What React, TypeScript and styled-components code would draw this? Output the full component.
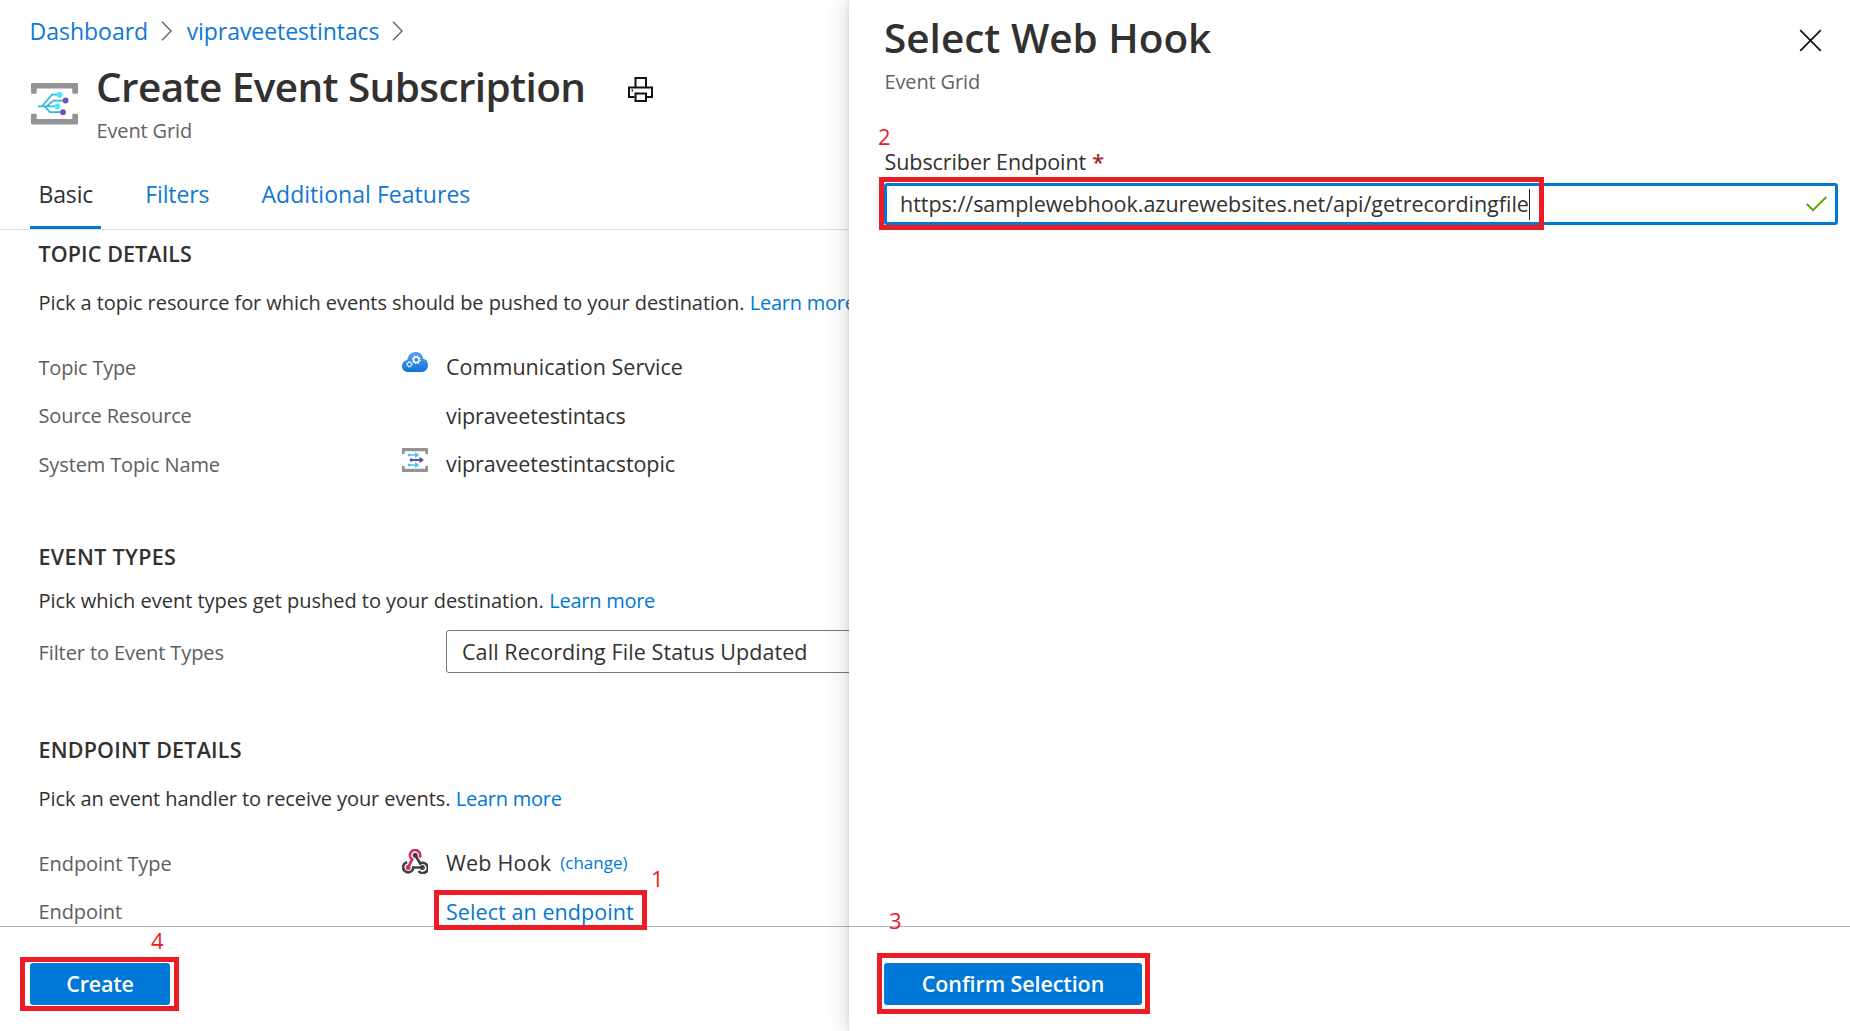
import React from 'react';
import styled, { createGlobalStyle } from 'styled-components';

const Global = createGlobalStyle`
  * { box-sizing: border-box; }
  html, body { margin: 0; padding: 0; background: #fff; overflow: hidden; }
  body { font-family: "Open Sans", "Noto Sans", sans-serif; color: #323130; }
`;

const Screen = styled.div`
  position: relative;
  display: flex;
  width: 1850px;
  height: 1031px;
  overflow: hidden;
  background: #fff;
`;

const MainBlade = styled.section`
  display: flex;
  flex-direction: column;
  width: 849px;
  flex: none;
  overflow: hidden;
`;

const ContextBlade = styled.section`
  position: relative;
  display: flex;
  flex-direction: column;
  flex: 1;
  background: #fff;
  box-shadow: 0 0 24px rgba(0, 0, 0, 0.18), 0 0 4px rgba(0, 0, 0, 0.1);
`;

const Txt = styled.span<{ $ls?: number }>`
  letter-spacing: ${(p) => p.$ls ?? 0}px;
  white-space: nowrap;
`;

const Breadcrumb = styled.nav`
  display: flex;
  align-items: center;
  height: 36px;
  margin-top: 13px;
  padding-left: 29.5px;
  font-size: 23px;
  line-height: 36px;
  color: #0f78d4;
  svg { margin: 0 14px 0 12.5px; }
`;

const Header = styled.header`
  display: flex;
  height: 110px;
  padding: 10px 0 0 31px;
`;

const HeaderIcon = styled.div`
  width: 47px;
  margin: 24px 18px 0 0;
  svg { display: block; }
`;

const Title = styled.h1`
  margin: 0;
  height: 57px;
  font-size: 40.5px;
  font-weight: 600;
  line-height: 56px;
`;

const Subtitle = styled.div`
  padding-left: 0.5px;
  font-size: 20px;
  line-height: 30px;
  color: #646260;
`;

const PrintIcon = styled.svg`
  margin: 18px 0 0 43px;
`;

const Tabs = styled.div`
  display: flex;
  gap: 36px;
  height: 71px;
  padding-left: 30px;
  border-bottom: 1px solid #dbdfe3;
`;

const Tab = styled.div<{ $active?: boolean }>`
  height: 70px;
  padding: 0 7.5px 0 8.5px;
  font-size: 23px;
  line-height: 70px;
  color: ${(p) => (p.$active ? '#323130' : '#0f78d4')};
  box-shadow: ${(p) => (p.$active ? 'inset 0 -3px 0 #0078d4' : 'none')};
`;

const Content = styled.div`
  flex: 1;
  min-height: 0;
  overflow: hidden;
  padding: 9px 0 0 38.5px;
`;

const SectionTitle = styled.h2<{ $gap: number; $top?: number }>`
  margin: ${(p) => p.$top ?? 0}px 0 ${(p) => p.$gap}px;
  font-size: 21.5px;
  font-weight: 600;
  line-height: 30px;
`;

const Para = styled.p<{ $gap: number }>`
  display: flex;
  margin: 0 0 ${(p) => p.$gap}px;
  font-size: 20px;
  line-height: 30px;
`;

const Link = styled.a<{ $small?: boolean }>`
  color: #0078d4;
  text-decoration: none;
  font-size: ${(p) => (p.$small ? '17px' : 'inherit')};
  margin-left: ${(p) => (p.$small ? '9px' : '0')};
`;

const LearnMore = styled(Link)`
  margin-left: 5.5px;
`;

const Row = styled.div<{ $h?: number }>`
  display: flex;
  align-items: center;
  height: ${(p) => p.$h ?? 48.5}px;
`;

const Label = styled.div<{ $drop?: number }>`
  width: 363.5px;
  flex: none;
  padding-top: ${(p) => p.$drop ?? 0}px;
  font-size: 20px;
  line-height: 30px;
  color: #605e5c;
`;

const IconCell = styled.div<{ $lift?: number }>`
  width: 44px;
  flex: none;
  padding-bottom: ${(p) => (p.$lift ?? 0) * 2}px;
  svg { display: block; }
`;

const Value = styled.div`
  display: flex;
  padding-bottom: 1px;
  font-size: 21.5px;
  line-height: 30px;
`;

const Select = styled.div`
  width: 520px;
  height: 43px;
  flex: none;
  padding-left: 15px;
  border: 1px solid #7a7876;
  border-radius: 3px;
  font-size: 21.5px;
  line-height: 41px;
`;

const Footer = styled.footer<{ $left: number }>`
  height: 105px;
  flex: none;
  padding: 36px 0 0 ${(p) => p.$left}px;
  border-top: 1px solid #b5b4b3;
`;

const Button = styled.button<{ $w: number }>`
  display: block;
  width: ${(p) => p.$w}px;
  height: 42px;
  padding: 0 0 1px;
  border: 0;
  border-radius: 3px;
  background: #0078d7;
  color: #fff;
  font: 650 21.5px/41px "Open Sans", "Noto Sans", sans-serif;
`;

const PanelHead = styled.header`
  display: flex;
  justify-content: space-between;
  height: 147px;
  padding: 10px 28px 0 35px;
`;

const CloseIcon = styled.svg`
  margin-top: 19px;
`;

const PanelBody = styled.div`
  flex: 1;
  padding: 0 12px 0 35px;
`;

const FieldLabel = styled.label`
  display: flex;
  height: 36px;
  padding-left: 0.5px;
  font-size: 21.5px;
  line-height: 30px;
`;

const Required = styled.span`
  margin-left: 6px;
  color: #a4262c;
  font-weight: 600;
`;

const Field = styled.div`
  display: flex;
  align-items: center;
  height: 42px;
  padding: 0 8px 0 13px;
  border: 3px solid #0078d4;
  border-radius: 3px;
  font-size: 21.5px;
  line-height: 36px;
`;

const Caret = styled.i`
  width: 1px;
  height: 31px;
  margin-right: auto;
  background: #222;
`;

const Marker = styled.div<{ $x: number; $y: number; $w: number; $h: number }>`
  position: absolute;
  left: ${(p) => p.$x}px;
  top: ${(p) => p.$y}px;
  width: ${(p) => p.$w}px;
  height: ${(p) => p.$h}px;
  border: 5px solid #ed1c24;
`;

const Step = styled.div<{ $x: number; $y: number }>`
  position: absolute;
  left: ${(p) => p.$x}px;
  top: ${(p) => p.$y}px;
  font-size: 22px;
  line-height: 30px;
  color: #ed1c24;
`;

const Chevron = () => (
  <svg width="12" height="20" viewBox="0 0 12 20" fill="none" stroke="#666" strokeWidth="1.4">
    <path d="M1 .7 10 10 1 19.3" />
  </svg>
);

const EventGridIcon = () => (
  <svg width="47" height="42" viewBox="0 0 47 42" fill="none">
    <path d="M0 1.2Q0 0 1.2 0H45.800Q47 0 47 1.200V9.500Q47 10.700 45.800 10.700H42.500Q41.300 10.700 41.300 9.500V5.400H5.700V9.500Q5.700 10.700 4.500 10.700H1.200Q0 10.700 0 9.500Z" fill="#949494" />
    <path d="M0 40.300Q0 41.500 1.200 41.500H45.800Q47 41.500 47 40.300V32Q47 30.800 45.800 30.800H42.500Q41.300 30.800 41.300 32V36.100H5.700V32Q5.700 30.800 4.500 30.800H1.200Q0 30.800 0 32Z" fill="#949494" />
    <path d="M7 23.300H26M11 23.300 21 11.600H28.500M15.500 23.300 22.500 17.600H34M12 23.300H13.500L19 29.200H31" stroke="#32b9da" strokeWidth="1.7" />
    <circle cx="28.600" cy="11.700" r="2.900" fill="#50e6ff" />
    <circle cx="34.600" cy="17.500" r="2.900" fill="#7150b8" />
    <circle cx="26.300" cy="23.400" r="2.900" fill="#50e6ff" />
    <circle cx="32" cy="29.200" r="2.900" fill="#7150b8" />
  </svg>
);

const Gear = ({ x, y, r }: { x: number; y: number; r: number }) => (
  <g transform={`translate(${x} ${y})`} stroke="#fff" fill="none">
    <circle r={r} strokeWidth={r * 0.5} />
    <circle r={r * 1.4} strokeWidth={r * 0.45} strokeDasharray={`${r * 0.55} ${r * 0.55}`} />
  </g>
);

const CloudIcon = () => (
  <svg width="26" height="20" viewBox="0 0 26 20">
    <defs>
      <linearGradient id="cloud" x1="0" y1="0" x2="0" y2="1">
        <stop offset="0" stopColor="#5ea0ef" />
        <stop offset="1" stopColor="#0f74d6" />
      </linearGradient>
    </defs>
    <path d="M6.200 20C2.600 20 0 17.400 0 14 0 10.900 2.300 8.500 5.300 8.100 5.800 3.500 9.300 0 13.600 0 17.600 0 20.600 2.700 21.300 6.800 24.200 7.300 26 9.800 26 13 26 17 23.400 20 19.800 20Z" fill="url(#cloud)" />
    <Gear x={14.300} y={7.800} r={2.700} />
    <Gear x={7.400} y={12.300} r={2} />
  </svg>
);

const TopicIcon = () => (
  <svg width="26" height="24" viewBox="0 0 26 24">
    <path d="M0 .8Q0 0 .8 0H25.200Q26 0 26 .8V6H23.300V3.200H2.700V6H0Z" fill="#949494" />
    <path d="M0 23.200Q0 24 .8 24H25.200Q26 24 26 23.200V18H23.300V20.800H2.700V18H0Z" fill="#949494" />
    <g fill="#4fc3ee">
      <path d="M6 6.200H13V4L17.300 7 13 10V7.800H6Z" />
      <path d="M6 16.200H13V14L17.300 17 13 20V17.800H6Z" />
      <circle cx="7.200" cy="7" r="1.500" /><circle cx="7.200" cy="17" r="1.500" />
    </g>
    <path d="M9 11.100H17.500V8.800L22 12 17.500 15.200V12.900H9Z" fill="#6b45b5" />
    <circle cx="9.300" cy="12" r="1.700" fill="#6b45b5" />
  </svg>
);

const WebhookIcon = () => (
  <svg width="26" height="25" viewBox="0 0 26 25" fill="none" strokeWidth="2.700">
    <path d="M17.600 8.500A5.100 5.100 0 1 0 10.200 10.400L6.300 17.800" stroke="#cf2f63" />
    <path d="M13.200 6.400 18.200 14.500A5.100 5.100 0 1 1 16.600 22" stroke="#404043" />
    <path d="M5.200 13.200A5.100 5.100 0 1 0 11.300 18.500H20" stroke="#404043" />
    <circle cx="13.200" cy="6.300" r="2.500" fill="#404043" />
    <circle cx="6.200" cy="18.500" r="2.500" fill="#cf2f63" />
    <circle cx="20.300" cy="18.500" r="2.500" fill="#404043" />
  </svg>
);

export default function App() {
  return (
    <>
      <Global />
      <Screen>
        <MainBlade>
          <Breadcrumb>
            <Txt>Dashboard</Txt>
            <Chevron />
            <Txt $ls={-0.07}>vipraveetestintacs</Txt>
            <Chevron />
          </Breadcrumb>
          <Header>
            <HeaderIcon><EventGridIcon /></HeaderIcon>
            <div>
              <Title><Txt $ls={-0.6}>Create Event Subscription</Txt></Title>
              <Subtitle><Txt $ls={-0.14}>Event Grid</Txt></Subtitle>
            </div>
            <PrintIcon width="25" height="25" viewBox="0 0 25 25" fill="none" stroke="#111" strokeWidth="2">
              <path d="M7.500 11V1H18V11" />
              <path d="M6.500 20H1V10.500H24V20H18.500" />
              <path d="M7.500 16.500H18V24H7.500Z" />
              <path d="M3.600 13.500H5" />
            </PrintIcon>
          </Header>
          <Tabs>
            <Tab $active><Txt $ls={-0.15}>Basic</Txt></Tab>
            <Tab><Txt $ls={-0.1}>Filters</Txt></Tab>
            <Tab><Txt $ls={0.04}>Additional Features</Txt></Tab>
          </Tabs>
          <Content>
            <SectionTitle $gap={19}><Txt $ls={0.1}>TOPIC DETAILS</Txt></SectionTitle>
            <Para $gap={25.5}>
              <Txt $ls={-0.06}>Pick a topic resource for which events should be pushed to your destination.</Txt>
              <LearnMore><Txt $ls={-0.25}>Learn more</Txt></LearnMore>
            </Para>
            <Row>
              <Label><Txt $ls={-0.2}>Topic Type</Txt></Label>
              <IconCell $lift={5.5}><CloudIcon /></IconCell>
              <Value><Txt $ls={0.03}>Communication Service</Txt></Value>
            </Row>
            <Row>
              <Label><Txt $ls={-0.18}>Source Resource</Txt></Label>
              <IconCell />
              <Value><Txt $ls={-0.1}>vipraveetestintacs</Txt></Value>
            </Row>
            <Row>
              <Label><Txt $ls={-0.13}>System Topic Name</Txt></Label>
              <IconCell $lift={4.5}><TopicIcon /></IconCell>
              <Value><Txt $ls={-0.08}>vipraveetestintacstopic</Txt></Value>
            </Row>
            <SectionTitle $gap={14} $top={53}><Txt $ls={0.35}>EVENT TYPES</Txt></SectionTitle>
            <Para $gap={14}>
              <Txt $ls={-0.02}>Pick which event types get pushed to your destination.</Txt>
              <LearnMore><Txt $ls={-0.25}>Learn more</Txt></LearnMore>
            </Para>
            <Row $h={43}>
              <Label $drop={2}><Txt $ls={-0.1}>Filter to Event Types</Txt></Label>
              <IconCell />
              <Select><Txt $ls={0.08}>Call Recording File Status Updated</Txt></Select>
            </Row>
            <SectionTitle $gap={19} $top={62}><Txt $ls={0.2}>ENDPOINT DETAILS</Txt></SectionTitle>
            <Para $gap={25.5}>
              <Txt $ls={-0.09}>Pick an event handler to receive your events.</Txt>
              <LearnMore><Txt $ls={-0.25}>Learn more</Txt></LearnMore>
            </Para>
            <Row>
              <Label><Txt $ls={-0.07}>Endpoint Type</Txt></Label>
              <IconCell $lift={2}><WebhookIcon /></IconCell>
              <Value>
                <Txt $ls={0.2}>Web Hook</Txt>
                <Link $small><Txt>(change)</Txt></Link>
              </Value>
            </Row>
            <Row>
              <Label><Txt $ls={-0.1}>Endpoint</Txt></Label>
              <IconCell />
              <Value><Link><Txt $ls={0.08}>Select an endpoint</Txt></Link></Value>
            </Row>
          </Content>
          <Footer $left={30}>
            <Button $w={140}><Txt $ls={-0.2}>Create</Txt></Button>
          </Footer>
        </MainBlade>
        <ContextBlade>
          <PanelHead>
            <div>
              <Title><Txt>Select Web Hook</Txt></Title>
              <Subtitle><Txt $ls={-0.14}>Event Grid</Txt></Subtitle>
            </div>
            <CloseIcon width="23" height="23" viewBox="0 0 23 23" stroke="#111" strokeWidth="1.700">
              <path d="M1.200 1.200 21.800 21.800M21.800 1.200 1.200 21.800" />
            </CloseIcon>
          </PanelHead>
          <PanelBody>
            <FieldLabel><Txt $ls={-0.08}>Subscriber Endpoint</Txt><Required>*</Required></FieldLabel>
            <Field>
              <Txt $ls={-0.025}>https://samplewebhook.azurewebsites.net/api/getrecordingfile</Txt>
              <Caret />
              <svg width="21" height="16" viewBox="0 0 21 16" fill="none" stroke="#57a300" strokeWidth="1.800">
                <path d="M.8 8 7 14.200 20.300 1" />
              </svg>
            </Field>
          </PanelBody>
          <Footer $left={35}>
            <Button $w={258}><Txt $ls={-0.1}>Confirm Selection</Txt></Button>
          </Footer>
        </ContextBlade>
        <Marker $x={434} $y={890} $w={213} $h={40} />
        <Marker $x={879} $y={177} $w={665} $h={53} />
        <Marker $x={877} $y={953} $w={273} $h={61} />
        <Marker $x={20} $y={957} $w={159} $h={54} />
        <Step $x={651} $y={863}>1</Step>
        <Step $x={878} $y={121}>2</Step>
        <Step $x={889} $y={905}>3</Step>
        <Step $x={151} $y={925}>4</Step>
      </Screen>
    </>
  );
}
